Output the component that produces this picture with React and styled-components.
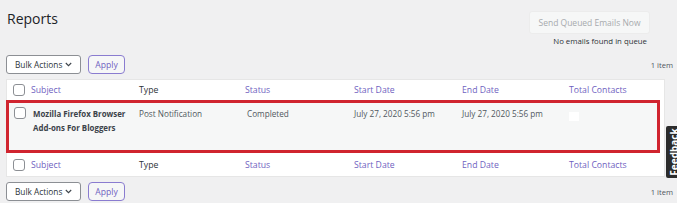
import styled, { createGlobalStyle } from "styled-components";

const GlobalStyle = createGlobalStyle`
  html, body {
    margin: 0;
    padding: 0;
    background: #f0f0f1;
    overflow: hidden;
  }
  body {
    font-family: "Open Sans", "Noto Sans", sans-serif;
    color: #3c434a;
  }
`;

const columns = ["Subject", "Type", "Status", "Start Date", "End Date", "Total Contacts"];

function ColumnRow({ edge }) {
  return (
    <HeadRow $edge={edge}>
      <CheckCell><Check /></CheckCell>
      {columns.map((c, i) => (
        <HeadCell key={c} $link={i !== 1}>{c}</HeadCell>
      ))}
    </HeadRow>
  );
}

function BulkBar({ bottom }) {
  return (
    <TableNav $bottom={bottom}>
      <BulkSelect>
        <span>Bulk Actions</span>
        <svg width="7" height="5" viewBox="0 0 7 5" fill="none">
          <path d="M0.8 1l2.7 2.7L6.2 1" stroke="#3c434a" strokeWidth="1.1" />
        </svg>
      </BulkSelect>
      <ApplyButton>Apply</ApplyButton>
      <ItemCount>1 item</ItemCount>
    </TableNav>
  );
}

export default function App() {
  return (
    <Page>
      <GlobalStyle />
      <Header>
        <Title>Reports</Title>
        <QueueBox>
          <QueueButton disabled>Send Queued Emails Now</QueueButton>
          <QueueNote>No emails found in queue</QueueNote>
        </QueueBox>
      </Header>

      <BulkBar />

      <Table>
        <ColumnRow edge="top" />
        <DataRow>
          <CheckCell><Check /></CheckCell>
          <SubjectCell>Mozilla Firefox Browser Add-ons For Bloggers</SubjectCell>
          <Cell>Post Notification</Cell>
          <Cell $pad={3}>Completed</Cell>
          <Cell>July 27, 2020 5:56 pm</Cell>
          <Cell>July 27, 2020 5:56 pm</Cell>
          <Cell><Blank /></Cell>
        </DataRow>
        <ColumnRow edge="bottom" />
      </Table>

      <BulkBar bottom />

      <FeedbackTab>
        <FeedbackLabel>Feedback</FeedbackLabel>
      </FeedbackTab>
    </Page>
  );
}

const Page = styled.div`
  position: relative;
  width: 677px;
  height: 203px;
  padding: 0 5px 0 6px;
  box-sizing: border-box;
  white-space: nowrap;
`;

const Header = styled.div`
  display: flex;
  justify-content: space-between;
  align-items: flex-start;
  height: 55px;
`;

const Title = styled.h1`
  margin: 9px 0 0 1px;
  font-size: 14px;
  font-weight: 400;
  color: #1d2327;
  line-height: 19px;
`;

const QueueBox = styled.div`
  display: flex;
  flex-direction: column;
  align-items: flex-end;
  margin: 11px 22px 0 0;
`;

const QueueButton = styled.button`
  width: 121px;
  height: 23px;
  font-family: inherit;
  font-size: 8.5px;
  color: #a7aaad;
  background: #f6f7f7;
  border: 1px solid #ececec;
  border-radius: 3px;
  padding: 0;
`;

const QueueNote = styled.div`
  font-size: 7.8px;
  line-height: 12px;
  margin: 1px 3px 0 0;
  color: #2c3338;
`;

const TableNav = styled.div`
  display: flex;
  align-items: center;
  gap: 7px;
  height: 19px;
  margin: ${(p) => (p.$bottom ? "5px 0 0" : "0 0 5px")};
`;

const BulkSelect = styled.div`
  display: flex;
  align-items: center;
  justify-content: space-between;
  box-sizing: border-box;
  width: 75px;
  height: 19px;
  padding: 0 8px 0 8px;
  background: #fff;
  border: 1px solid #8c8f94;
  border-radius: 3px;
  font-size: 8.3px;
  color: #2c3338;
`;

const ApplyButton = styled.button`
  box-sizing: border-box;
  width: 37px;
  height: 19px;
  padding: 0;
  font-family: inherit;
  font-size: 8.6px;
  color: #6f5fbf;
  background: #f6f7f7;
  border: 1px solid #8a7cd0;
  border-radius: 4px;
`;

const ItemCount = styled.span`
  margin-left: auto;
  margin-right: -1px;
  font-size: 7.6px;
  color: #50575e;
`;

const Table = styled.div`
  background: #fff;
  border: 1px solid #e6e6e6;
  width: 659px;
  box-sizing: border-box;
`;

const rowGrid = `
  display: grid;
  grid-template-columns: 23px 108px 106px 109px 108px 107px 1fr;
`;

const HeadRow = styled.div`
  ${rowGrid}
  align-items: center;
  height: ${(p) => (p.$edge === "top" ? "20px" : "23px")};
`;

const DataRow = styled.div`
  ${rowGrid}
  grid-template-columns: 21px 108px 106px 109px 108px 107px 1fr;
  align-items: start;
  height: 53px;
  box-sizing: border-box;
  margin: 0 4px 0 -1px;
  padding-top: 4px;
  border: 3px solid #d0242f;
  background: #f6f7f7;
`;

const CheckCell = styled.div`
  display: flex;
  justify-content: center;
`;

const Check = styled.span`
  display: block;
  width: 10px;
  height: 10px;
  border: 1px solid #8c8f94;
  border-radius: 3px;
  background: #fff;
`;

const HeadCell = styled.div`
  font-size: 8.7px;
  color: ${(p) => (p.$link ? "#6f5fbf" : "#2c3338")};
  padding-left: 1px;
`;

const Cell = styled.div`
  font-size: 8.2px;
  line-height: 14px;
  color: #50575e;
  padding-left: ${(p) => p.$pad ?? 1}px;
`;

const SubjectCell = styled(Cell)`
  white-space: normal;
  font-size: 7.9px;
  font-weight: 700;
  color: #3c434a;
  line-height: 14px;
  padding-left: 3px;
  padding-right: 2px;
`;

const Blank = styled.span`
  display: block;
  width: 10px;
  height: 9px;
  margin-top: 5px;
  background: #fff;
`;

const FeedbackTab = styled.div`
  position: absolute;
  left: 666px;
  top: 126px;
  width: 16px;
  height: 52px;
  background: #2c2c2c;
  border-radius: 2px 0 0 2px;
  overflow: hidden;
`;

const FeedbackLabel = styled.span`
  position: absolute;
  left: 1px;
  top: 26px;
  transform-origin: 0 0;
  transform: rotate(-90deg) translateX(-50%);
  color: #fff;
  font-size: 10px;
  font-weight: 700;
  line-height: 14px;
`;
